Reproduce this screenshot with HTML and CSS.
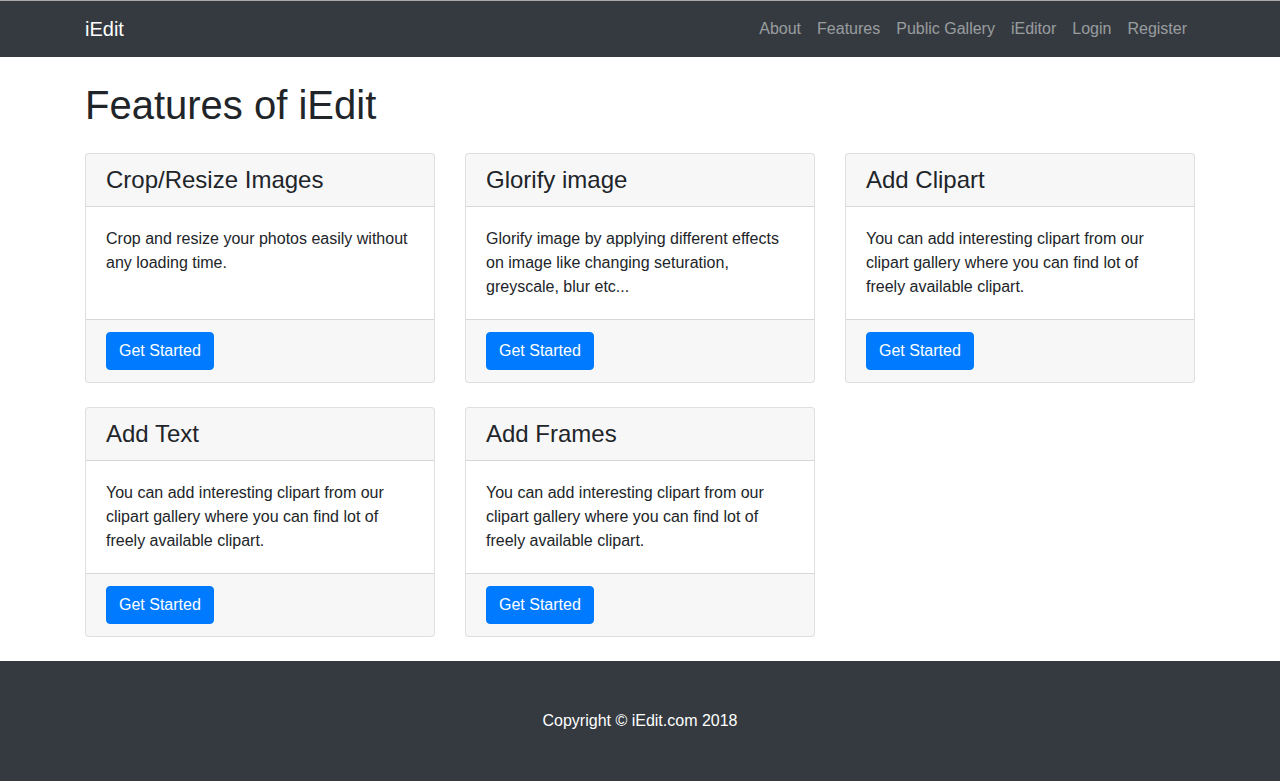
FILE: index.html
```html
<!DOCTYPE html>
<html lang="en">
<head>
<meta charset="utf-8">
<title>iEdit - Features</title>
<link rel="stylesheet" href="styles.css">
</head>
<body>
<nav class="navbar">
  <div class="container nav-inner">
    <a class="brand" href="#">iEdit</a>
    <ul class="nav-links">
      <li><a href="#">About</a></li>
      <li><a href="#">Features</a></li>
      <li><a href="#">Public Gallery</a></li>
      <li><a href="#">iEditor</a></li>
      <li><a href="#">Login</a></li>
      <li><a href="#">Register</a></li>
    </ul>
  </div>
</nav>
<main class="container">
  <h1 class="title">Features of iEdit</h1>
  <div class="cards">
    <div class="card">
      <div class="card-header"><h4>Crop/Resize Images</h4></div>
      <div class="card-body"><p>Crop and resize your photos easily without any loading time.</p></div>
      <div class="card-footer"><a class="btn" href="#">Get Started</a></div>
    </div>
    <div class="card">
      <div class="card-header"><h4>Glorify image</h4></div>
      <div class="card-body"><p>Glorify image by applying different effects on image like changing seturation, greyscale, blur etc...</p></div>
      <div class="card-footer"><a class="btn" href="#">Get Started</a></div>
    </div>
    <div class="card">
      <div class="card-header"><h4>Add Clipart</h4></div>
      <div class="card-body"><p>You can add interesting clipart from our clipart gallery where you can find lot of freely available clipart.</p></div>
      <div class="card-footer"><a class="btn" href="#">Get Started</a></div>
    </div>
    <div class="card">
      <div class="card-header"><h4>Add Text</h4></div>
      <div class="card-body"><p>You can add interesting clipart from our clipart gallery where you can find lot of freely available clipart.</p></div>
      <div class="card-footer"><a class="btn" href="#">Get Started</a></div>
    </div>
    <div class="card">
      <div class="card-header"><h4>Add Frames</h4></div>
      <div class="card-body"><p>You can add interesting clipart from our clipart gallery where you can find lot of freely available clipart.</p></div>
      <div class="card-footer"><a class="btn" href="#">Get Started</a></div>
    </div>
  </div>
</main>
<footer class="footer">
  <p>Copyright &copy; iEdit.com 2018</p>
</footer>
</body>
</html>
```
FILE: styles.css
```css
* { box-sizing: border-box; }
html, body { margin: 0; padding: 0; }
body {
  font-family: "Liberation Sans", Arial, sans-serif;
  font-size: 16px;
  line-height: 1.5;
  color: #212529;
  background: #fff;
}
.container {
  width: 1140px;
  margin: 0 auto;
  padding: 0 15px;
}
.navbar {
  background: #343a40;
  border-top: 1px solid #a9a9a9;
}
.nav-inner {
  display: flex;
  align-items: center;
  justify-content: space-between;
  height: 56px;
}
.brand {
  color: #fff;
  font-size: 20px;
  line-height: 30px;
  text-decoration: none;
}
.nav-links {
  display: flex;
  list-style: none;
  margin: 0;
  padding: 0;
}
.nav-links a {
  display: block;
  padding: 8px 8px;
  color: rgba(255,255,255,.5);
  text-decoration: none;
}
.title {
  font-size: 40px;
  font-weight: 500;
  line-height: 1.2;
  margin: 24px 0;
  color: #212529;
}
.cards {
  display: grid;
  grid-template-columns: repeat(3, 350px);
  column-gap: 30px;
  row-gap: 24px;
  padding-bottom: 24px;
}
.card {
  display: flex;
  flex-direction: column;
  border: 1px solid rgba(0,0,0,.125);
  border-radius: 4px;
  background: #fff;
  overflow: hidden;
}
.card-header {
  padding: 12px 20px;
  background: rgba(0,0,0,.03);
  border-bottom: 1px solid rgba(0,0,0,.125);
}
.card-header h4 {
  margin: 0;
  font-size: 24px;
  font-weight: 500;
  line-height: 28px;
}
.card-body {
  flex: 1 1 auto;
  padding: 20px;
}
.card-body p { margin: 0; }
.card-footer {
  padding: 12px 20px;
  background: rgba(0,0,0,.03);
  border-top: 1px solid rgba(0,0,0,.125);
}
.btn {
  display: inline-block;
  padding: 6px 12px;
  border: 1px solid #007bff;
  border-radius: 4px;
  background: #007bff;
  color: #fff;
  text-decoration: none;
  font-size: 16px;
  line-height: 24px;
}
.footer {
  background: #343a40;
  color: #fff;
  padding: 48px 0;
  text-align: center;
}
.footer p { margin: 0; }
```
